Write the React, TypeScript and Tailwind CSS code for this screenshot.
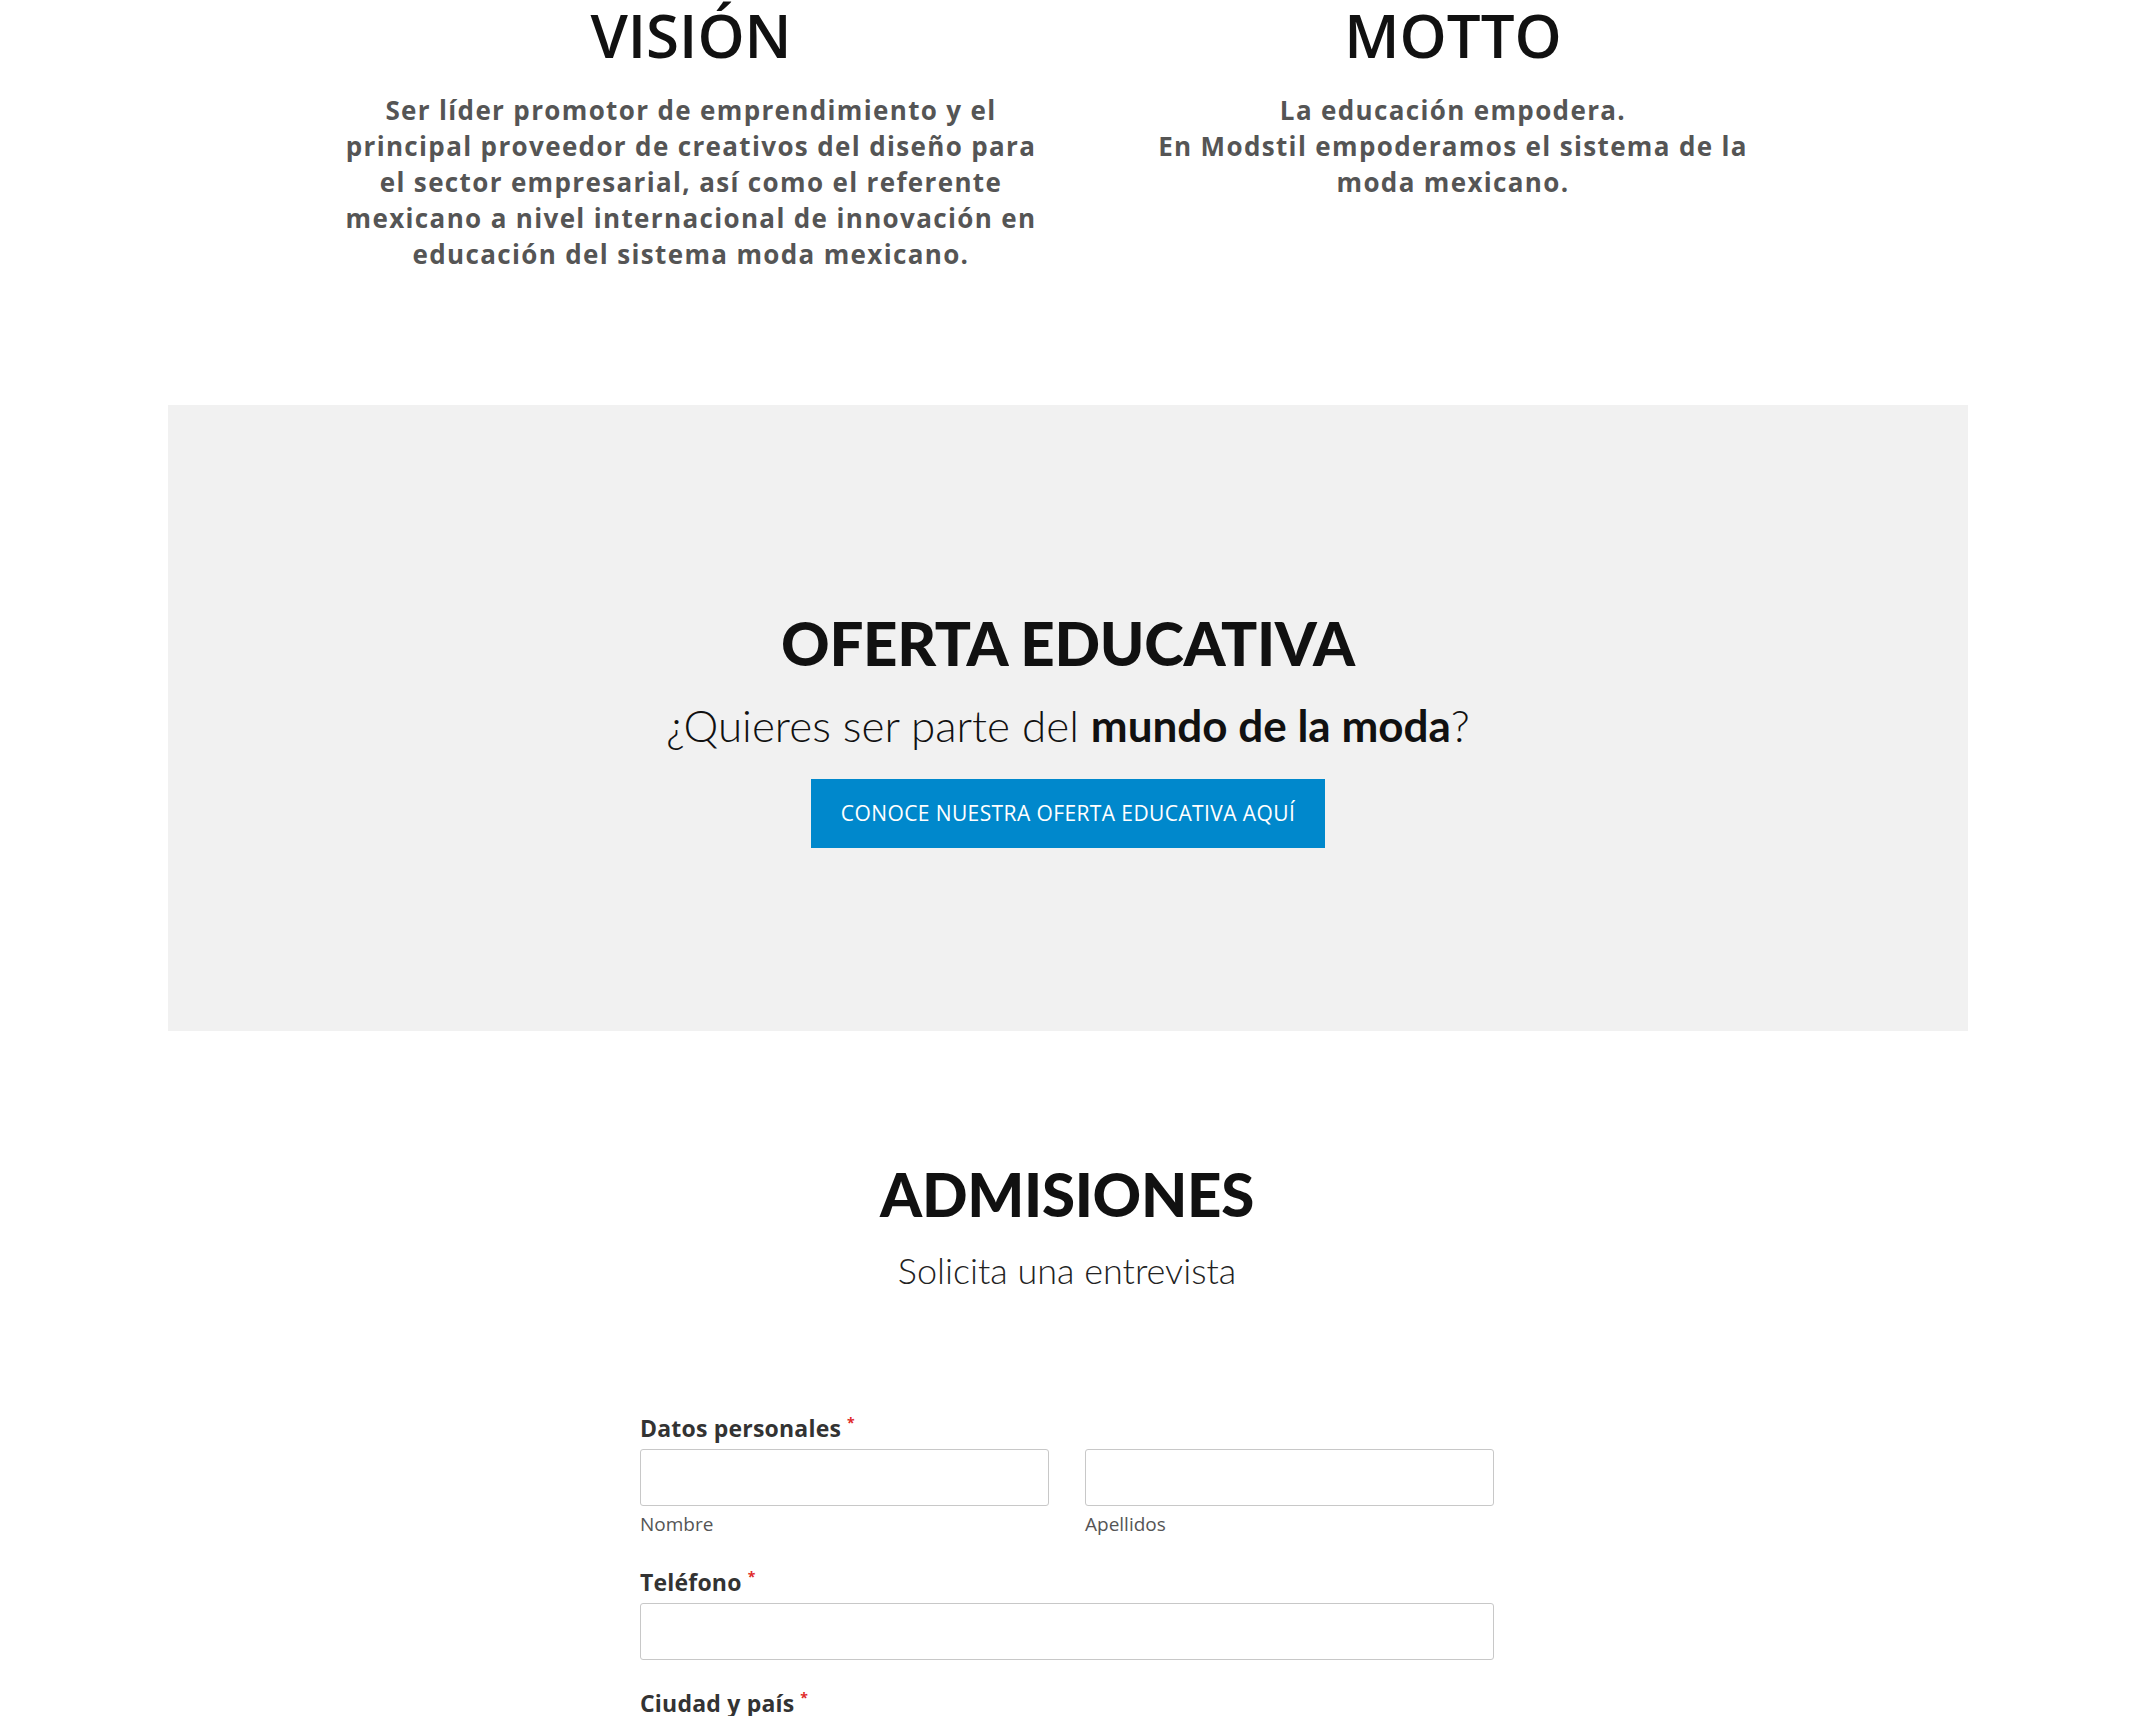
import React from 'react';

const raleway = "font-['Open_Sans',sans-serif]";
const lato = "font-['Lato',sans-serif]";

function Column({ title, lines }: { title: string; lines: string[] }) {
  return (
    <div className="flex flex-col items-center text-center">
      <h2 className={`${raleway} text-[60px] leading-[60px] font-semibold text-[#111]`}>{title}</h2>
      <p className={`${raleway} mt-[27px] text-[26px] leading-[36px] font-bold tracking-[1.35px] text-[#555] whitespace-nowrap`}>
        {lines.map((l, i) => (
          <React.Fragment key={i}>
            {l}
            {i < lines.length - 1 && <br />}
          </React.Fragment>
        ))}
      </p>
    </div>
  );
}

function Label({ children }: { children: React.ReactNode }) {
  return (
    <label className={`${raleway} block text-[23px] leading-[30px] font-bold tracking-[0.2px] text-[#333]`}>
      {children}
      <span className="ml-[6px] align-top text-[14px] leading-[20px] text-[#e02b2b]">*</span>
    </label>
  );
}

function Input() {
  return <input type="text" className="block h-[57px] w-full rounded-[3px] border border-[#c8c8c8] bg-white px-3 outline-none" />;
}

export default function App() {
  return (
    <div className="min-h-screen bg-white pb-10">
      {/* Vision / Motto */}
      <section className="mx-auto grid w-[1534px] grid-cols-2 pl-[10px] pt-[5px]">
        <Column
          title="VISIÓN"
          lines={[
            'Ser líder promotor de emprendimiento y el',
            'principal proveedor de creativos del diseño para',
            'el sector empresarial, así como el referente',
            'mexicano a nivel internacional de innovación en',
            'educación del sistema moda mexicano.',
          ]}
        />
        <Column
          title="MOTTO"
          lines={['La educación empodera.', 'En Modstil empoderamos el sistema de la', 'moda mexicano.']}
        />
      </section>

      {/* Oferta educativa */}
      <section className="ml-[168px] mt-[133px] flex w-[1800px] flex-col items-center bg-[#f1f1f1] pt-[208px] pb-[183px]">
        <h2 className={`${lato} text-[60px] leading-[60px] font-black tracking-[-0.3px] text-[#111]`}>OFERTA EDUCATIVA</h2>
        <p className={`${lato} mt-[26px] text-[44px] leading-[52px] font-light text-[#111]`}>
          ¿Quieres ser parte del <span className="font-bold">mundo de la moda</span>?
        </p>
        <a
          href="#"
          className={`${raleway} mt-[28px] flex h-[69px] w-[514px] items-center justify-center bg-[#0088cc] text-[21px] tracking-[0.4px] text-white`}
        >
          CONOCE NUESTRA OFERTA EDUCATIVA AQUÍ
        </a>
      </section>

      {/* Admisiones */}
      <section className="mt-[133px] flex flex-col items-center">
        <h2 className={`${lato} text-[60px] leading-[60px] font-black tracking-[-0.3px] text-[#111]`}>ADMISIONES</h2>
        <p className={`${lato} mt-[25px] text-[36px] leading-[43px] font-light text-[#222]`}>Solicita una entrevista</p>

        <form className="mt-[121px] w-[854px]">
          <Label>Datos personales</Label>
          <div className="mt-[6px] grid grid-cols-2 gap-[36px]">
            <div>
              <Input />
              <span className={`${raleway} mt-[5px] block text-[19px] leading-[26px] text-[#555]`}>Nombre</span>
            </div>
            <div>
              <Input />
              <span className={`${raleway} mt-[5px] block text-[19px] leading-[26px] text-[#555]`}>Apellidos</span>
            </div>
          </div>

          <div className="mt-[30px]">
            <Label>Teléfono</Label>
            <div className="mt-[6px]">
              <Input />
            </div>
          </div>

          <div className="mt-[28px]">
            <Label>Ciudad y país</Label>
            <div className="mt-[6px]">
              <Input />
            </div>
          </div>
        </form>
      </section>
    </div>
  );
}
